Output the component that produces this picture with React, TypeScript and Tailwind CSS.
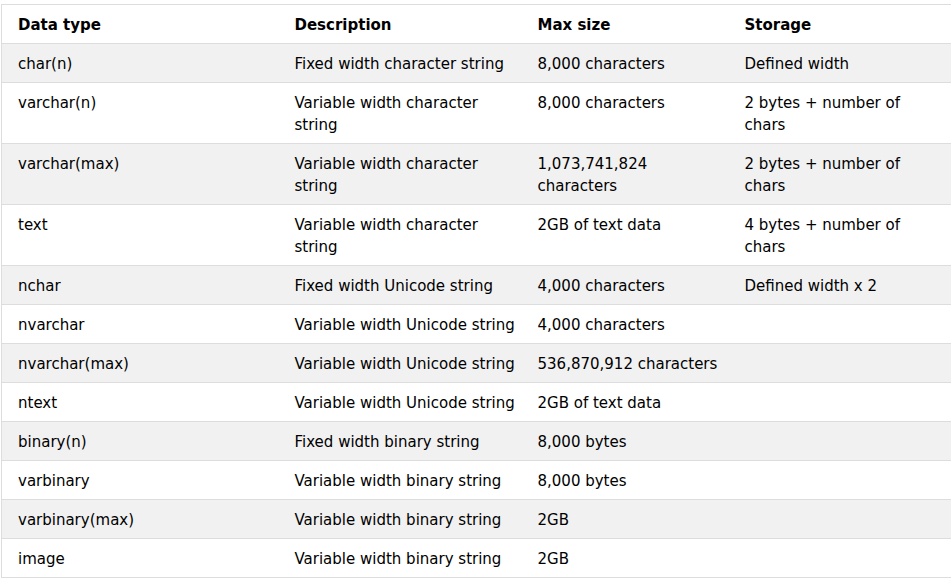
import React from "react";

const rows: [string, string, string, string][] = [
  ["char(n)", "Fixed width character string", "8,000 characters", "Defined width"],
  ["varchar(n)", "Variable width character string", "8,000 characters", "2 bytes + number of chars"],
  ["varchar(max)", "Variable width character string", "1,073,741,824 characters", "2 bytes + number of chars"],
  ["text", "Variable width character string", "2GB of text data", "4 bytes + number of chars"],
  ["nchar", "Fixed width Unicode string", "4,000 characters", "Defined width x 2"],
  ["nvarchar", "Variable width Unicode string", "4,000 characters", ""],
  ["nvarchar(max)", "Variable width Unicode string", "536,870,912 characters", ""],
  ["ntext", "Variable width Unicode string", "2GB of text data", ""],
  ["binary(n)", "Fixed width binary string", "8,000 bytes", ""],
  ["varbinary", "Variable width binary string", "8,000 bytes", ""],
  ["varbinary(max)", "Variable width binary string", "2GB", ""],
  ["image", "Variable width binary string", "2GB", ""],
];

const App = () => {
  return (
    <div className="w-[951px] h-[578px] overflow-hidden bg-white pt-1 pl-px">
      <table
        className="table-fixed border-collapse w-[970px] border border-[#dddddd] text-[15px] leading-[22px] text-black"
        style={{ fontFamily: '"DejaVu Sans", Verdana, sans-serif' }}
      >
        <colgroup>
          <col className="w-[285px]" />
          <col className="w-[243px]" />
          <col className="w-[207px]" />
          <col />
        </colgroup>
        <thead>
          <tr className="border-b border-[#dddddd] bg-white">
            <th className="text-left font-bold pt-[9px] pb-[7px] pl-4 pr-2">Data type</th>
            <th className="text-left font-bold pt-[9px] pb-[7px] px-2">Description</th>
            <th className="text-left font-bold pt-[9px] pb-[7px] px-2">Max size</th>
            <th className="text-left font-bold pt-[9px] pb-[7px] px-2">Storage</th>
          </tr>
        </thead>
        <tbody>
          {rows.map((r, i) => (
            <tr
              key={i}
              className={`border-b border-[#dddddd] ${i % 2 === 0 ? "bg-[#f1f1f1]" : "bg-white"}`}
            >
              <td className="align-top pt-[9px] pb-[7px] pl-4 pr-2">{r[0]}</td>
              <td className="align-top pt-[9px] pb-[7px] px-2">{r[1]}</td>
              <td className="align-top pt-[9px] pb-[7px] px-2">{r[2]}</td>
              <td className="align-top pt-[9px] pb-[7px] pl-2 pr-[60px]">{r[3]}</td>
            </tr>
          ))}
        </tbody>
      </table>
    </div>
  );
};

export default App;
